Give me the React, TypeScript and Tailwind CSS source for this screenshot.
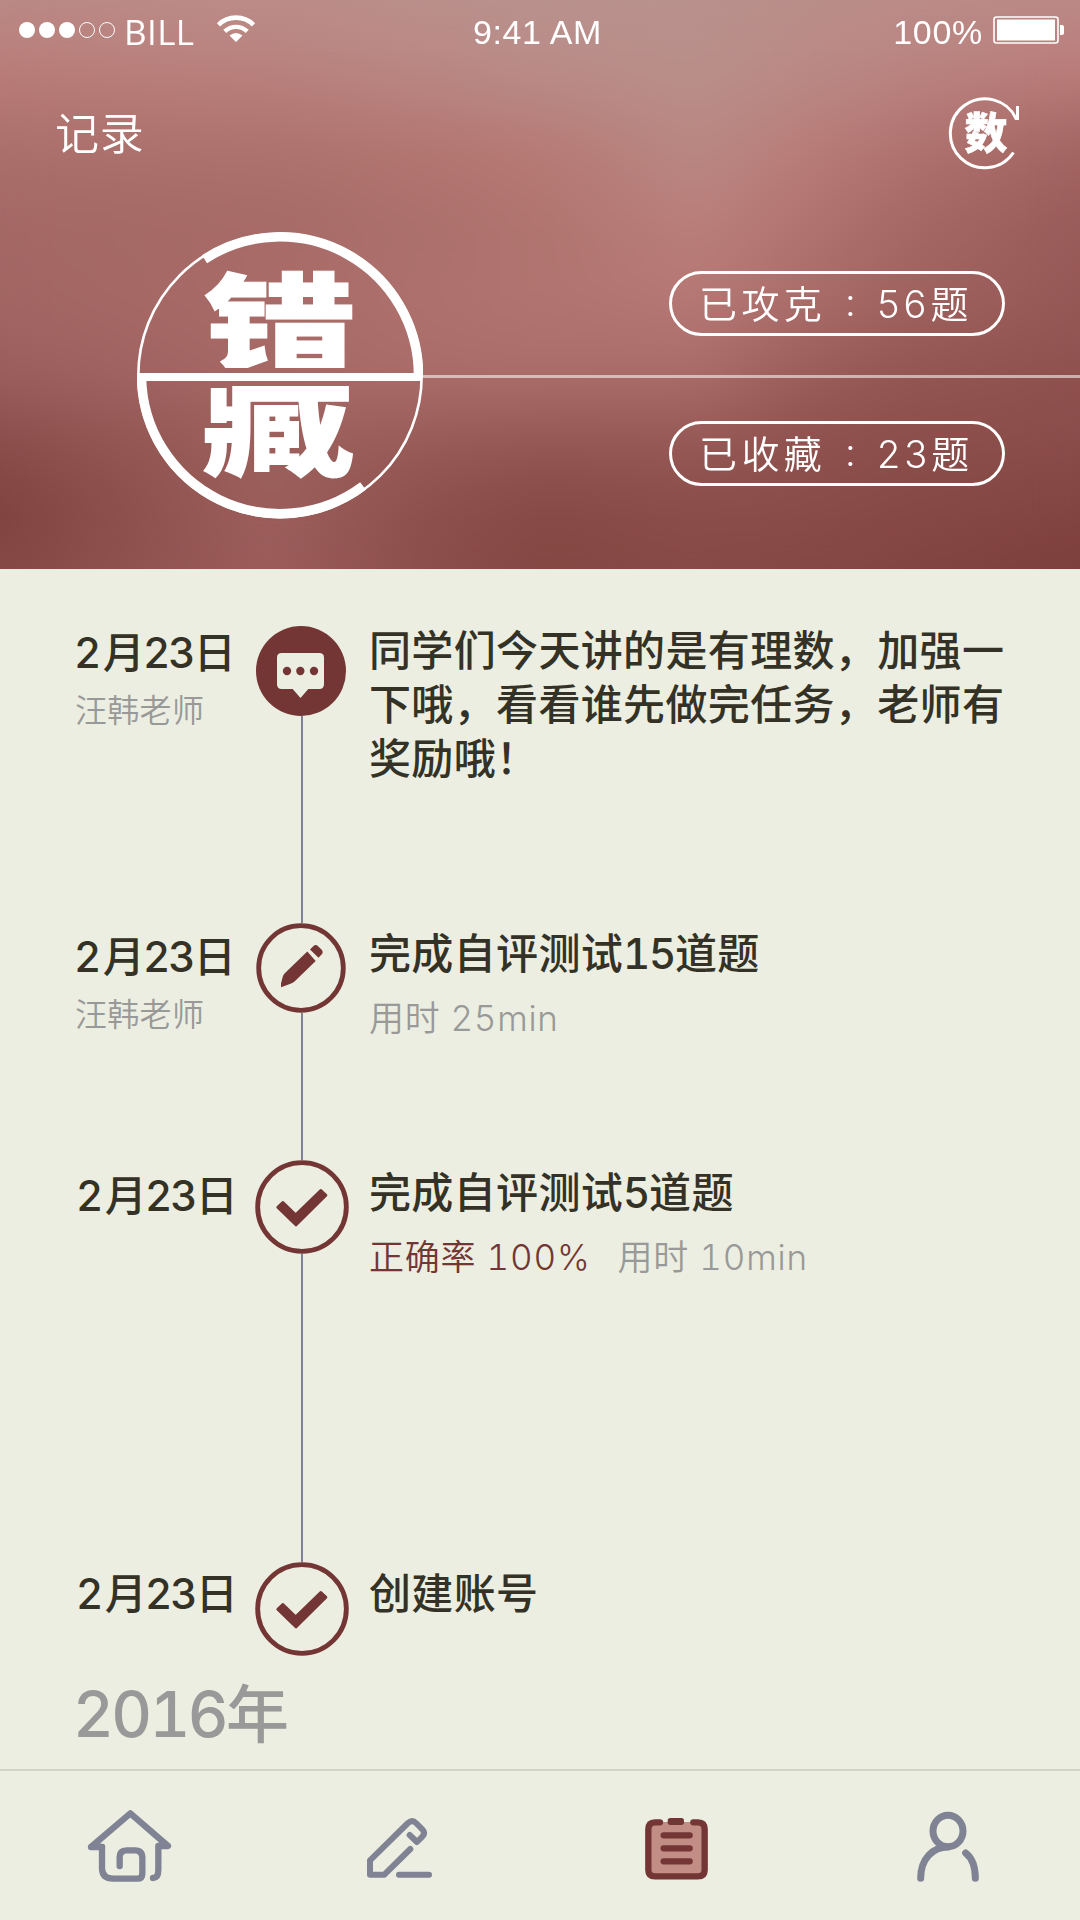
import type { ReactNode } from "react";

/* Vertical colour strips faded into each other from left to right. */
const STRIPS = [
  "bg-[linear-gradient(180deg,#bb8a86_0,#b97c78_75px,#ab706b_150px,#a46865_225px,#a26663_300px,#9b5e5c_375px,#8b4e4b_440px,#7f433f_515px,#864a46_569px)]",
  "bg-[linear-gradient(180deg,#bb8d89_0,#b9807c_75px,#ad726d_150px,#a76b67_225px,#a96b68_300px,#a66966_375px,#9c605d_440px,#9c5f5c_515px,#9b5d5a_569px)] [mask-image:linear-gradient(90deg,transparent_0,black_270px)]",
  "bg-[linear-gradient(180deg,#ba918d_0,#ba8682_75px,#b37671_150px,#ac706c_225px,#ae716d_300px,#aa6d6a_375px,#985b58_440px,#8d504d_505px,#8b4e4a_569px)] [mask-image:linear-gradient(90deg,transparent_270px,black_430px)]",
  "bg-[linear-gradient(180deg,#b9928e_0,#b98b87_75px,#b77a75_150px,#b17570_225px,#b17470_300px,#ab6e6b_375px,#955855_440px,#874a46_505px,#854843_569px)] [mask-image:linear-gradient(90deg,transparent_430px,black_540px)]",
  "bg-[linear-gradient(180deg,#b9918d_0,#b98f8a_75px,#b98883_150px,#ba7f7b_225px,#b67874_300px,#a96c69_375px,#965956_440px,#8b4e4b_505px,#874a46_569px)] [mask-image:linear-gradient(90deg,transparent_540px,black_700px)]",
  "bg-[linear-gradient(180deg,#b98f8b_0,#ba8985_75px,#b97d78_150px,#b27471_225px,#aa6d6a_300px,#9b5e5b_375px,#8f524f_440px,#854844_569px)] [mask-image:linear-gradient(90deg,transparent_700px,black_800px)]",
  "bg-[linear-gradient(180deg,#ba8d89_0,#ba8380_75px,#b07370_150px,#a66966_225px,#a06360_300px,#935653_375px,#8c4f4c_440px,#824541_569px)] [mask-image:linear-gradient(90deg,transparent_800px,black_900px)]",
  "bg-[linear-gradient(180deg,#bb8986_0,#bb817e_50px,#b97b78_75px,#ad706d_110px,#a26562_150px,#985b58_225px,#955855_300px,#8e514e_375px,#8a4d4a_440px,#7c3f3b_569px)] [mask-image:linear-gradient(90deg,transparent_900px,black_1080px)]",
];

function StatusBar() {
  return (
    <div className="grid h-[60px] grid-cols-3 items-center pl-[19px] pr-[15px] text-white">
      <div className="flex items-center">
        <div className="flex gap-1">
          <i className="size-4 rounded-full bg-white" />
          <i className="size-4 rounded-full bg-white" />
          <i className="size-4 rounded-full bg-white" />
          <i className="size-4 rounded-full border-[1.5px] border-white" />
          <i className="size-4 rounded-full border-[1.5px] border-white" />
        </div>
        <span className="ml-[9px] mt-1 font-['Open_Sans',sans-serif] text-[35px] leading-[56px] tracking-[0.4px]">
          BILL
        </span>
        <svg className="ml-[21px]" width="40" height="30" viewBox="0 0 40 30" fill="none" stroke="white">
          <path d="M2.5 9.8A25 25 0 0 1 37.500 9.800" strokeWidth="4.600" />
          <path d="M8.800 16.400A16 16 0 0 1 31.200 16.400" strokeWidth="4.400" />
          <path d="M13.500 20.500Q20 15.500 26.500 20.500L20 27Z" fill="white" stroke="none" />
        </svg>
      </div>
      <span className="mt-[3px] pr-[9px] text-center font-['Liberation_Sans',sans-serif] text-[34px] leading-[56px] tracking-[0.6px]">
        9:41 AM
      </span>
      <div className="flex items-center justify-end">
        <span className="mr-2.5 mt-[3px] font-['Liberation_Sans',sans-serif] text-[34px] leading-[56px] tracking-[0.7px]">
          100%
        </span>
        <svg width="72" height="28" viewBox="0 0 72 28" fill="none">
          <rect x="1" y="1" width="64" height="26" rx="2.500" stroke="white" strokeWidth="1.600" />
          <rect x="4" y="3.500" width="58" height="21" fill="white" />
          <path d="M67 9h2q2 0 2 2v6q0 2-2 2h-2z" fill="white" />
        </svg>
      </div>
    </div>
  );
}

function SubjectMark() {
  return (
    <svg width="72" height="76" viewBox="947 95 72 76" fill="none" stroke="white" strokeWidth="3">
      <path d="M1017.500 106V118.500H1016A34.500 34.500 0 1 0 1013.500 152.500" />
      <text
        x="986"
        y="149"
        fill="white"
        stroke="white"
        strokeWidth="0.5"
        textAnchor="middle"
        className="font-['Noto_Sans_CJK_SC',sans-serif] text-[43px] font-black"
      >
        数
      </text>
    </svg>
  );
}

function Emblem() {
  return (
    <svg width="286" height="287" viewBox="137 232 286 287" fill="none" stroke="white">
      <defs>
        <clipPath id="upper">
          <rect x="137" y="232" width="286" height="136" />
        </clipPath>
        <clipPath id="lower">
          <rect x="137" y="386" width="286" height="133" />
        </clipPath>
      </defs>
      <circle cx="280" cy="375.500" r="141.700" strokeWidth="2.600" />
      <path d="M204.500 259.200A138.500 138.500 0 0 1 418.500 377" strokeWidth="9.500" />
      <path d="M141.500 377A138.500 138.500 0 0 0 363 486" strokeWidth="9.500" />
      <path d="M138 377H422" strokeWidth="8" />
      <g
        fill="white"
        textAnchor="middle"
        className="font-['Noto_Sans_CJK_SC',sans-serif] text-[100px] font-black"
      >
        <g clipPath="url(#upper)" stroke="white" strokeWidth="1">
          <text transform="translate(280 364) scale(1.520 1.080)">错</text>
        </g>
        <g clipPath="url(#lower)" stroke="none">
          <text transform="translate(278 465) scale(1.540 1.300)">藏</text>
        </g>
      </g>
    </svg>
  );
}

function Pill({ label, count }: { label: string; count: number }) {
  return (
    <div className="flex h-[65px] w-[336px] items-center rounded-full border-[3px] border-white pl-[27px] text-[38px] font-[350] leading-none tracking-[4.4px] text-white">
      <span className="w-[146px]">{label}</span>
      <span className="w-8 -translate-y-0.5">:</span>
      <span className="tracking-[4px]">{count}题</span>
    </div>
  );
}

function Header() {
  return (
    <header className="relative h-[569px] overflow-hidden">
      {STRIPS.map((strip) => (
        <div key={strip} className={`absolute inset-0 ${strip}`} />
      ))}
      <div className="absolute inset-0 backdrop-blur-[22px]" />
      <div className="relative">
        <StatusBar />
        <div className="flex h-[146px] items-center justify-between pl-[55px] pr-[61px]">
          <h1 className="pt-0.5 text-[44px] font-[350] leading-none tracking-[0.8px] text-white">记录</h1>
          <SubjectMark />
        </div>
        <div className="mt-[26px] flex h-[287px] items-center pl-[137px]">
          <Emblem />
          <div className="flex flex-1 flex-col pt-1.5">
            <div className="flex justify-end pr-[75px]">
              <Pill label="已攻克" count={56} />
            </div>
            <div className="mb-[43px] mt-[39px] h-[3px] bg-white/55" />
            <div className="flex justify-end pr-[75px]">
              <Pill label="已收藏" count={23} />
            </div>
          </div>
        </div>
      </div>
    </header>
  );
}

function MessageNode() {
  return (
    <svg className="-ml-0.5 block" width="90" height="90" viewBox="618 78 270 270">
      <circle cx="753" cy="213" r="135" fill="#733634" />
      <path
        d="M695 159H808Q822 159 822 173V253Q822 267 808 267H775L751.500 294L728 267H695Q681 267 681 253V173Q681 159 695 159Z"
        fill="#ebeee0"
      />
      <g fill="#733634">
        <circle cx="711" cy="213" r="12.500" />
        <circle cx="751" cy="213" r="12.500" />
        <circle cx="792" cy="213" r="12.500" />
      </g>
    </svg>
  );
}

function PencilNode() {
  return (
    <svg className="-ml-0.5 block" width="90" height="90" viewBox="256.500 923 90 90">
      <circle cx="301.500" cy="968" r="42.300" fill="none" stroke="#733634" strokeWidth="4.800" />
      <g fill="#733634">
        <path d="M307.800 951.500L316.200 961L295 981.500Q293.500 983 291 983.800L281.500 987.300V983.500L283.300 976.500Q283.800 974.500 285.500 973Z" />
        <path d="M310.500 949.500L314 946Q316.300 944 318.600 946.200L322 949.400Q324.200 952 322.300 954.300L319 957.700Z" />
      </g>
    </svg>
  );
}

function CheckNode() {
  return (
    <svg className="-ml-px block" width="94" height="94" viewBox="614 68 282 282">
      <circle cx="755" cy="209" r="133" fill="none" stroke="#733634" strokeWidth="14.500" />
      <path
        d="M682 210L698 195L736 232L811 159L827 174L737 263Z"
        fill="#733634"
        stroke="#733634"
        strokeWidth="8"
        strokeLinejoin="round"
      />
    </svg>
  );
}

function Entry({
  node,
  height,
  date,
  content,
}: {
  node: ReactNode;
  height: string;
  date: ReactNode;
  content: ReactNode;
}) {
  return (
    <li className={`grid grid-cols-[255px_94px_1fr] ${height}`}>
      <div className="pl-[74px]">{date}</div>
      <div className="flex flex-col items-center">
        {node}
        <div className="w-0.5 flex-1 bg-[#7f8195]" />
      </div>
      <div className="pl-5">{content}</div>
    </li>
  );
}

function DateText() {
  return (
    <div className="text-[42px] font-medium leading-[42px] tracking-[-1.8px]">
      <span className="tracking-[1.5px]">2</span>月23日
    </div>
  );
}

function Timeline() {
  return (
    <ul className="pt-[57px] tabular-nums text-[#343226]">
      <Entry
        node={<MessageNode />}
        height="h-[297px]"
        date={
          <div className="pt-1.5">
            <DateText />
            <div className="mt-[21px] pl-px text-[32px] font-[350] leading-8 tracking-[0.3px] text-[#999]">
              汪韩老师
            </div>
          </div>
        }
        content={
          <p className="-mt-0.5 whitespace-nowrap text-[42px] font-medium leading-[54px] tracking-[0.35px]">
            同学们今天讲的是有理数，加强一
            <br />
            下哦，看看谁先做完任务，老师有
            <br />
            奖励哦！
          </p>
        }
      />
      <Entry
        node={<PencilNode />}
        height="h-[237px]"
        date={
          <div className="pt-[13px]">
            <DateText />
            <div className="mt-[21px] pl-px text-[32px] font-[350] leading-8 tracking-[0.3px] text-[#999]">
              汪韩老师
            </div>
          </div>
        }
        content={
          <div className="pt-1">
            <p className="text-[42px] font-medium leading-[54px] tracking-[0.35px]">
              完成自评测试<span className="tracking-[-1.3px]">15</span>道题
            </p>
            <p className="mt-[19px] text-[35px] font-[350] leading-9 tracking-[0.7px] text-[#999]">用时 25min</p>
          </div>
        }
      />
      <Entry
        node={<CheckNode />}
        height="h-[402px]"
        date={
          <div className="pl-0.5 pt-[15px]">
            <DateText />
          </div>
        }
        content={
          <div className="pt-1.5">
            <p className="text-[42px] font-medium leading-[54px] tracking-[0.35px]">
              完成自评测试<span className="tracking-[-1.3px]">5</span>道题
            </p>
            <p className="mt-[19px] flex gap-[27px] text-[35px] font-[350] leading-9 tracking-[0.8px] text-[#999]">
              <span className="text-[#733634]">正确率 100%</span>
              <span>用时 10min</span>
            </p>
          </div>
        }
      />
      <Entry
        node={<CheckNode />}
        height="h-[94px]"
        date={
          <div className="pl-0.5 pt-[11px]">
            <DateText />
          </div>
        }
        content={<p className="pt-[5px] text-[42px] font-medium leading-[54px] tracking-[0.35px]">创建账号</p>}
      />
    </ul>
  );
}

function TabBar() {
  const cell = "block h-[149px] w-[270px]";
  return (
    <nav className="grid h-[151px] grid-cols-4 border-t-2 border-[#d2d4c8]">
      <svg className={cell} viewBox="0 0 270 149">
        <g
          transform="translate(60 -11) scale(.33333)"
          fill="none"
          stroke="#808394"
          strokeWidth="19"
          strokeLinecap="round"
          strokeLinejoin="round"
        >
          <path d="M126 261H93L211 160L324 258H295V330Q295 354 279 354" />
          <path d="M126 261V325Q126 356 160 356H232Q247 356 247 341V294Q247 271 225 271H200Q179 271 179 292V318" />
        </g>
      </svg>
      <svg className={cell} viewBox="0 0 270 149">
        <g
          transform="translate(-210 -11) scale(.33333)"
          fill="none"
          stroke="#808394"
          strokeWidth="18"
          strokeLinecap="round"
          strokeLinejoin="round"
        >
          <path d="M1051 267L973 344H930V301L1044 189Q1057 178 1068 189L1087 208Q1098 219 1087 230L1071 246L1049 225" />
          <path d="M1017 344H1107" />
        </g>
      </svg>
      <svg className={cell} viewBox="0 0 270 149">
        <g
          transform="translate(60 -11) scale(.33333)"
          fill="none"
          stroke="#733634"
          strokeWidth="19"
          strokeLinecap="round"
          strokeLinejoin="round"
        >
          <rect x="145" y="186" width="169" height="163" rx="16" fill="#c18d85" stroke="none" />
          <path d="M180 187H165Q145 187 145 208V330Q145 349 165 349H294Q314 349 314 330V208Q314 187 294 187H280" />
          <rect x="203" y="174" width="49" height="21" rx="8" fill="#733634" stroke="none" />
          <path d="M191 226H269M191 265H269M191 304H269" />
        </g>
      </svg>
      <svg className={cell} viewBox="0 0 270 149">
        <g
          transform="translate(-210 -11) scale(.33333)"
          fill="none"
          stroke="#808394"
          strokeWidth="21"
          strokeLinecap="round"
        >
          <ellipse cx="1044" cy="213" rx="45" ry="47" />
          <path d="M962 355C962 295 1000 261 1044 261" />
          <path d="M1097 279C1115 293 1126 320 1126 355" />
        </g>
      </svg>
    </nav>
  );
}

export default function App() {
  return (
    <div className="flex h-[1920px] w-[1080px] flex-col overflow-hidden bg-[#ebeee0] font-['Inter','Noto_Sans_CJK_SC',sans-serif]">
      <Header />
      <Timeline />
      <div className="flex h-[113px] items-center pl-[73px] pt-1 text-[63px] font-medium tabular-nums leading-none tracking-[-2.6px] text-[#999]">
        2016年
      </div>
      <TabBar />
    </div>
  );
}
